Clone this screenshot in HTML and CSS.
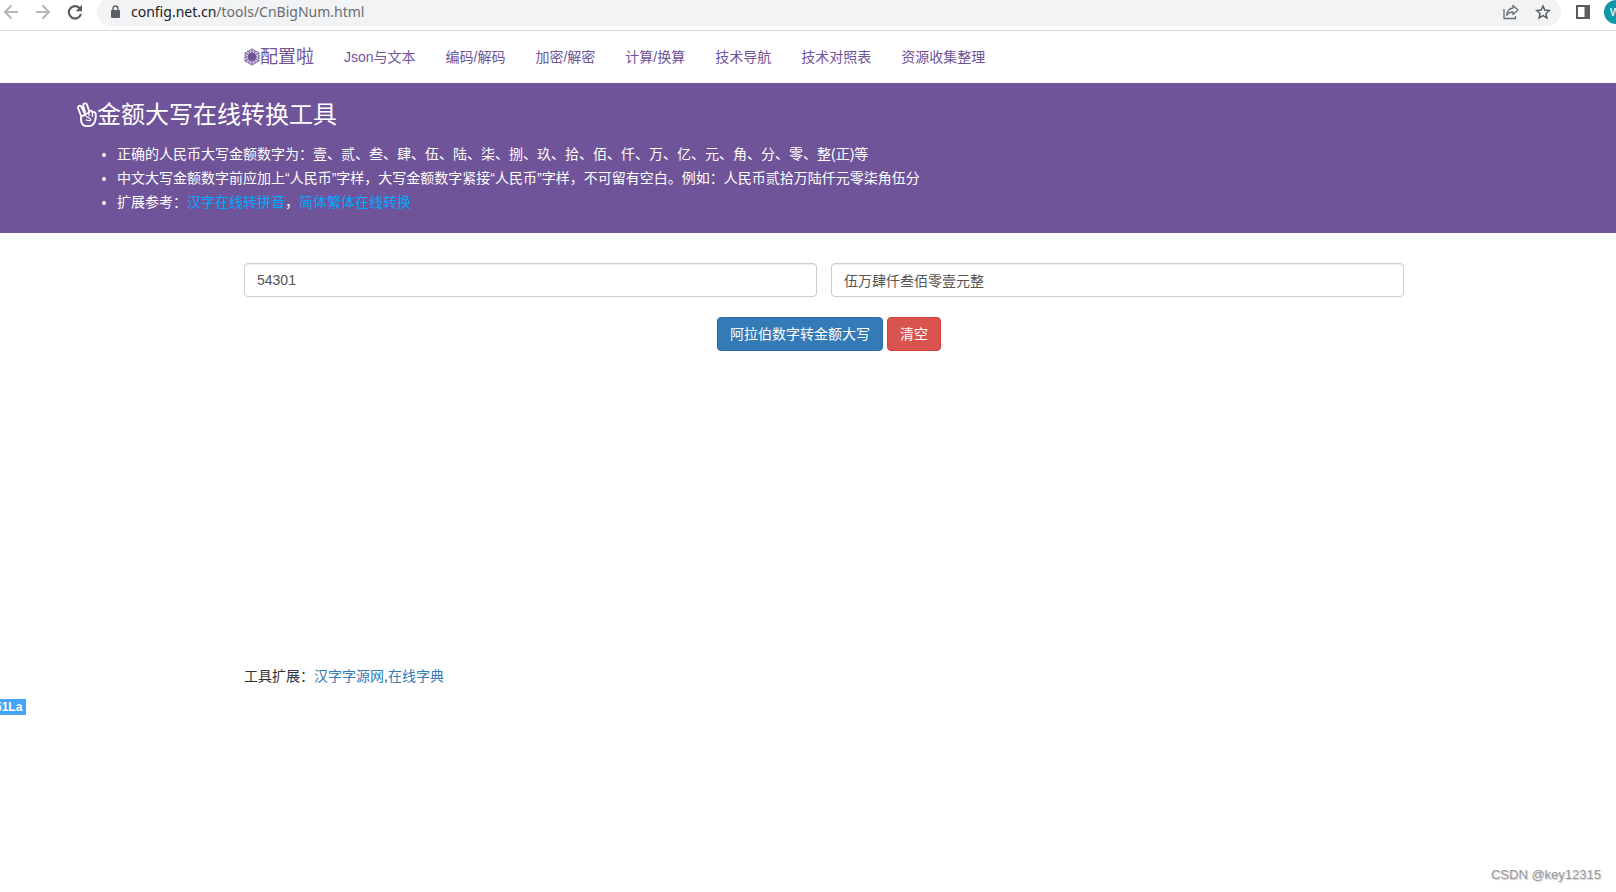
FILE: index.html
```html
<!DOCTYPE html>
<html lang="zh-CN">
<head>
<meta charset="utf-8">
<title>金额大写在线转换工具</title>
<link rel="stylesheet" href="styles.css">
</head>
<body>
<div class="toolbar">
  <div class="history">
    <button class="tool" aria-label="Back"><svg width="16" height="16" viewBox="0 0 16 16" fill="none" stroke="#b4b6b8" stroke-width="2"><path d="M15 8H2M8.500 1.500L2 8l6.500 6.500"/></svg></button>
    <button class="tool" aria-label="Forward"><svg width="16" height="16" viewBox="0 0 16 16" fill="none" stroke="#b4b6b8" stroke-width="2"><path d="M1 8h13M7.500 1.500L14 8l-6.500 6.500"/></svg></button>
    <button class="tool" aria-label="Reload"><svg width="16" height="16" viewBox="0 0 16 16"><path d="M13 4.500A6.200 6.200 0 1 0 14 10" fill="none" stroke="#5a5d61" stroke-width="2.200"/><path d="M15 .8v6.400H8.600z" fill="#5a5d61"/></svg></button>
  </div>
  <div class="address">
    <svg width="10" height="14" viewBox="0 0 10 14"><rect x="1" y="5" width="9" height="8" rx="1" fill="#5a5d61"/><path d="M3 6V3.500a2.500 2.500 0 0 1 5 0V6" fill="none" stroke="#5a5d61" stroke-width="1.400"/></svg>
    <span class="url"><span class="host">config.net.cn</span>/tools/CnBigNum.html</span>
    <button class="tool" aria-label="Share"><svg width="16" height="16" viewBox="0 0 16 16" fill="none" stroke="#6a6d71" stroke-width="1.300" stroke-linejoin="round"><path d="M1 5v9.500h11.500V12M10 1.500L15 6l-5 4.500V8C7 8 5 9 3.500 11.500 4 7.500 6 4.500 10 4z"/></svg></button>
    <button class="tool" aria-label="Bookmark"><svg width="16" height="16" viewBox="0 0 16 16" fill="none" stroke="#5a5d61" stroke-width="1.500"><path d="M8 2l1.800 4.100 4.500.4-3.400 3 1 4.400L8 11.600l-3.900 2.300 1-4.400-3.400-3 4.500-.4z"/></svg></button>
  </div>
  <button class="tool" aria-label="Side panel"><svg width="14" height="14" viewBox="0 0 14 14"><path d="M1 1h12v12H1z" fill="#fff" stroke="#5a5d61" stroke-width="2"/><path d="M8.500 0H14v14H8.500z" fill="#5a5d61"/></svg></button>
  <button class="avatar" aria-label="Profile">w</button>
</div>

<nav class="navbar">
  <div class="container nav-row">
    <a class="brand" href="#"><svg width="16" height="18" viewBox="0 0 16 18"><path d="M8 .5l7.500 4.200v8.600L8 17.500.5 13.300V4.700z" fill="#c9bedb"/><g stroke="#6f5499" stroke-width="1" fill="none"><path d="M8 1l7 4v8l-7 4-7-4V5z" stroke-dasharray="1.500 1"/><path d="M8 1v16M1 5l14 8M15 5L1 13M4.500 3l7 12M11.500 3l-7 12M1 9h14" stroke-dasharray="2 .6"/></g><circle cx="8" cy="9" r="4.200" fill="#6f5499"/></svg>配置啦</a>
    <a href="#">Json与文本</a>
    <a href="#">编码/解码</a>
    <a href="#">加密/解密</a>
    <a href="#">计算/换算</a>
    <a href="#">技术导航</a>
    <a href="#">技术对照表</a>
    <a href="#">资源收集整理</a>
  </div>
</nav>

<header class="banner">
  <h1><svg width="20" height="26" viewBox="0 0 20 26" fill="none" stroke="#fff" stroke-width="1.900" stroke-linejoin="round" stroke-linecap="round"><path d="M4.300 14.500L1.200 6.500C.3 4 3.300 2.600 4.500 5L8 12M8 10L6.300 4C5.700 1.200 9.300.4 10.200 3l2 6.500M12 10.500c.2-2.600 3.300-2.400 3.400 0 1.600-1 3.500 0 3.300 1.800.4 4.500-.5 7.700-2.700 10.200-1.500 2-7.500 2.200-10 .5C4 20.500 3.500 17.500 4.300 14.500z"/><path d="M5 14c2-1.300 4-.6 5 1l3 1.500c1.400.8.600 2.400-.8 2.200L9 18M15.400 10.500v4M12 10.500v3.500" stroke-width="1.200"/></svg>金额大写在线转换工具</h1>
  <ul>
    <li>正确的人民币大写金额数字为：壹、贰、叁、肆、伍、陆、柒、捌、玖、拾、佰、仟、万、亿、元、角、分、零、整(正)等</li>
    <li>中文大写金额数字前应加上“人民币”字样，大写金额数字紧接“人民币”字样，不可留有空白。例如：人民币贰拾万陆仟元零柒角伍分</li>
    <li>扩展参考：<a href="#">汉字在线转拼音</a>，<a href="#">简体繁体在线转换</a></li>
  </ul>
</header>

<main class="container">
  <form class="converter">
    <div class="fields">
      <input type="text" value="54301" aria-label="阿拉伯数字">
      <input type="text" value="伍万肆仟叁佰零壹元整" aria-label="金额大写">
    </div>
    <div class="actions">
      <button type="button" class="btn primary">阿拉伯数字转金额大写</button>
      <button type="button" class="btn danger">清空</button>
    </div>
  </form>
  <p class="more">工具扩展：<a href="#">汉字字源网</a>,<a href="#">在线字典</a></p>
</main>

<a class="stats" href="#">51La</a>
<footer class="credit">CSDN @key12315</footer>
</body>
</html>
```
FILE: styles.css
```css
* { box-sizing: border-box; }

body {
  margin: 0;
  min-height: 100vh;
  display: flex;
  flex-direction: column;
  overflow-x: hidden;
  background: #fff;
  color: #333;
  font: 14px/20px "Liberation Sans", "Noto Sans CJK SC", sans-serif;
}

a { color: #337ab7; text-decoration: none; }

button, input { font: inherit; }

/* Browser toolbar */
.toolbar {
  display: flex;
  align-items: center;
  height: 31px;
  padding: 0 0 6px 3px;
  border-bottom: 1px solid #d9dbdd;
  overflow: hidden;
}

.history { display: flex; gap: 16px; width: 94px; }

.tool {
  display: flex;
  padding: 0;
  border: 0;
  background: none;
}

.address {
  flex: 1;
  display: flex;
  align-items: center;
  gap: 16px;
  height: 28px;
  padding: 0 10px 0 13px;
  border-radius: 14px;
  background: #f1f3f4;
}

.url {
  flex: 1;
  margin-left: -5px;
  padding-bottom: 1px;
  color: #6a6d71;
  font: 14px/20px "Noto Sans", "Open Sans", sans-serif;
}

.host { color: #202124; }

.address + .tool { margin: 0 14px 0 15px; }

.avatar {
  flex: none;
  width: 24px;
  height: 24px;
  margin-right: -12px;
  padding: 0 0 2px 6px;
  border: 0;
  border-radius: 50%;
  background: #0f98a9;
  color: #fff;
  font-size: 14px;
  line-height: 20px;
  text-align: left;
}

/* Page */
.container {
  width: 100%;
  max-width: 1192px;
  margin: 0 auto;
  padding-left: 32px;
}

.navbar { padding: 16px 0; }

.nav-row { display: flex; flex-wrap: wrap; gap: 0 30px; }

.nav-row a { color: #6f5499; }

.nav-row .brand { display: flex; align-items: center; font-size: 18px; }

.banner {
  padding: 16px 77px 19px;
  background: #6f5499;
  color: #fff;
}

.banner h1 {
  display: flex;
  align-items: center;
  margin: 0 0 12px;
  font-size: 24px;
  font-weight: 400;
  line-height: 31px;
}

.banner ul { margin: 0; padding-left: 40px; line-height: 24px; }

.banner a { color: #00a8ff; }

.converter { padding-top: 30px; }

.fields { display: flex; gap: 14px; }

.fields input {
  flex: 1;
  min-width: 0;
  height: 34px;
  padding: 6px 12px;
  border: 1px solid #ccc;
  border-radius: 4px;
  box-shadow: inset 0 1px 1px rgba(0, 0, 0, 0.075);
  color: #555;
}

.actions {
  display: flex;
  justify-content: center;
  gap: 4px;
  margin-top: 20px;
  padding-left: 10px;
}

.btn {
  padding: 6px 12px;
  border: 1px solid;
  border-radius: 4px;
  color: #fff;
}

.primary { background: #337ab7; border-color: #2e6da4; }

.danger { background: #d9534f; border-color: #d43f3a; }

.more { margin: 315px 0 13px; }

.stats {
  align-self: flex-start;
  margin-left: -5px;
  padding: 0 4px 0 0;
  background: #45a5f5;
  color: #fff;
  font-size: 12px;
  font-weight: 700;
  line-height: 16px;
}

.credit {
  margin-top: auto;
  padding: 0 15px 7px;
  color: #999;
  font-size: 13px;
  text-align: right;
  text-shadow: 1px 1px 1px #ccc;
}
```
